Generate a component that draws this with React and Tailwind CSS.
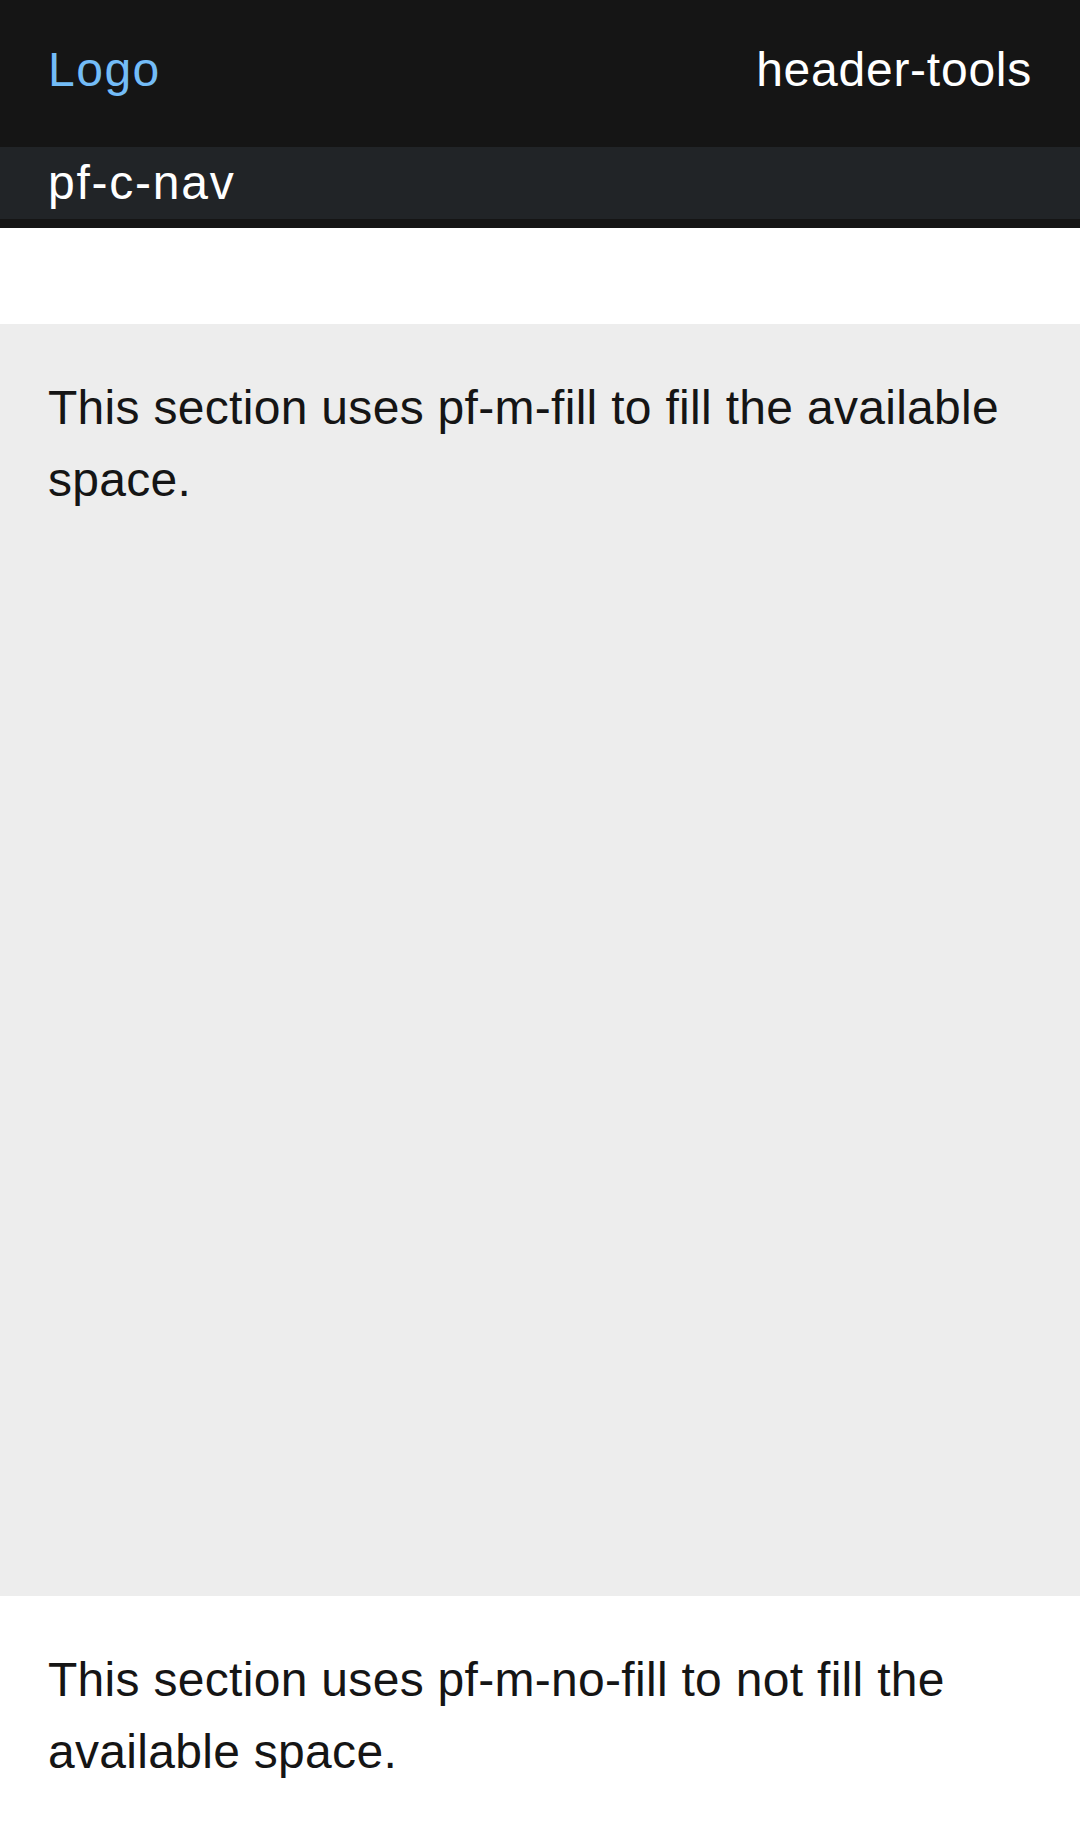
export default function App() {
  return (
    <div className="flex min-h-screen flex-col bg-white text-[48px] leading-[72px] text-[#151515] font-['Liberation_Sans',Arial,sans-serif]">
      <header className="bg-[#151515] pb-[9px]">
        <div className="flex h-[147px] items-start justify-between px-[48px] pt-[34px]">
          <a className="tracking-[1.5px] text-[#73bcf7]">Logo</a>
          <div className="tracking-[0.75px] text-white">header-tools</div>
        </div>
        <nav className="bg-[#212427] px-[48px] tracking-[1.75px] text-white">pf-c-nav</nav>
      </header>

      <section className="h-[96px] bg-white" />

      <section className="flex-1 bg-[#ededed] p-[48px] tracking-[0.3px]">
        <p>This section uses pf-m-fill to fill the available space.</p>
      </section>

      <section className="bg-white p-[48px] tracking-[0.3px]">
        <p>This section uses pf-m-no-fill to not fill the available space.</p>
      </section>
    </div>
  )
}
